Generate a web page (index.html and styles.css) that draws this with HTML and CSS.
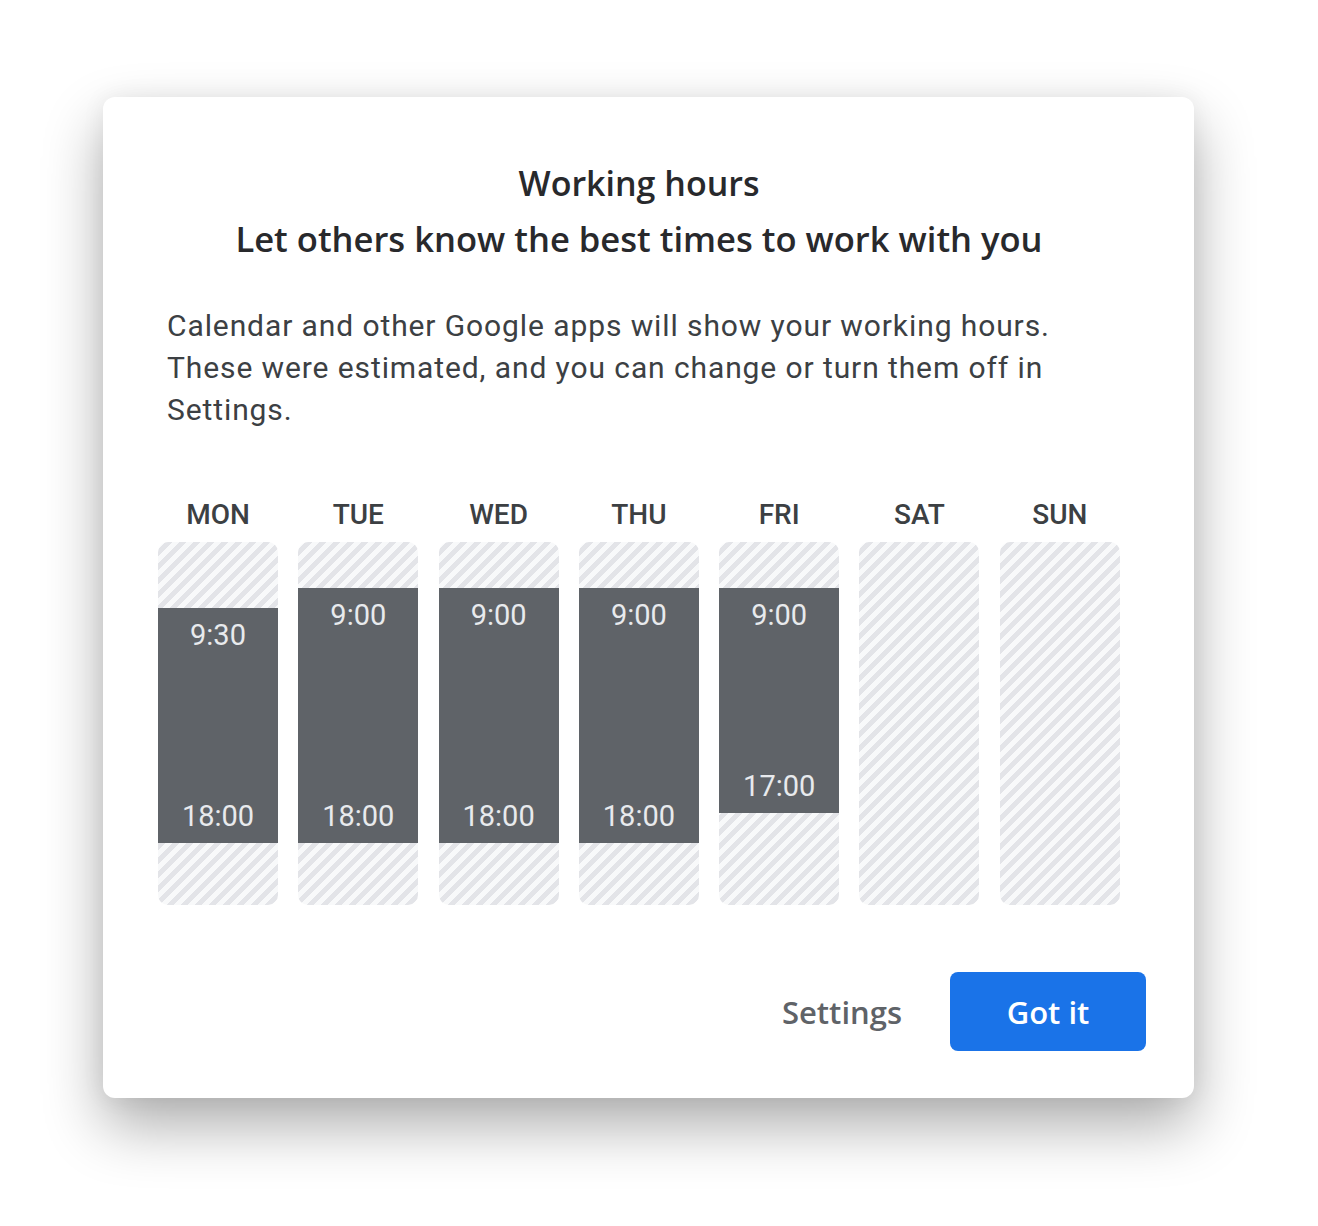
FILE: index.html
```html
<!DOCTYPE html>
<html lang="en">
<head>
    <meta charset="UTF-8">
    <meta name="viewport" content="width=device-width, initial-scale=1.0">
    <title>Working hours</title>
    <link rel="stylesheet" href="styles.css">
</head>
<body>
    <div class="dialog">
        <header class="dialog-header">
            <h1>Working hours</h1>
            <h2>Let others know the best times to work with you</h2>
        </header>

        <p class="dialog-text">
            Calendar and other Google apps will show your working hours.
            These were estimated, and you can change or turn them off in
            Settings.
        </p>

        <div class="week">
            <div class="day">
                <span class="day-name">MON</span>
                <div class="day-track">
                    <div class="hours" style="top: 66px; height: 235px;">
                        <span>9:30</span>
                        <span>18:00</span>
                    </div>
                </div>
            </div>
            <div class="day">
                <span class="day-name">TUE</span>
                <div class="day-track">
                    <div class="hours" style="top: 46px; height: 255px;">
                        <span>9:00</span>
                        <span>18:00</span>
                    </div>
                </div>
            </div>
            <div class="day">
                <span class="day-name">WED</span>
                <div class="day-track">
                    <div class="hours" style="top: 46px; height: 255px;">
                        <span>9:00</span>
                        <span>18:00</span>
                    </div>
                </div>
            </div>
            <div class="day">
                <span class="day-name">THU</span>
                <div class="day-track">
                    <div class="hours" style="top: 46px; height: 255px;">
                        <span>9:00</span>
                        <span>18:00</span>
                    </div>
                </div>
            </div>
            <div class="day">
                <span class="day-name">FRI</span>
                <div class="day-track">
                    <div class="hours" style="top: 46px; height: 225px;">
                        <span>9:00</span>
                        <span>17:00</span>
                    </div>
                </div>
            </div>
            <div class="day">
                <span class="day-name">SAT</span>
                <div class="day-track"></div>
            </div>
            <div class="day">
                <span class="day-name">SUN</span>
                <div class="day-track"></div>
            </div>
        </div>

        <div class="dialog-actions">
            <button class="btn btn-text">Settings</button>
            <button class="btn btn-primary">Got it</button>
        </div>
    </div>
</body>
</html>
```

FILE: styles.css
```css
body {
    margin: 0;
    padding: 97px 0 128px 103px;
    background-color: #fff;
    font-family: Roboto, 'Noto Sans', sans-serif;
    color: #3c4043;
}

.dialog {
    box-sizing: border-box;
    width: 1091px;
    height: 1001px;
    padding: 58px 74px 47px 55px;
    background: #fff;
    border-radius: 12px;
    box-shadow: 0 28px 60px rgba(0, 0, 0, 0.32), 0 0 24px rgba(0, 0, 0, 0.06);
}

.dialog-header {
    text-align: center;
    color: #28292c;
}

.dialog-header h1,
.dialog-header h2 {
    margin: 0;
    font-family: 'Open Sans', sans-serif;
    font-size: 34px;
    font-weight: 600;
    line-height: 56px;
}

.dialog-header h2 {
    font-size: 34.6px;
}

.dialog-text {
    margin: 38px 0 0;
    padding: 0 9px;
    font-size: 30px;
    letter-spacing: 0.9px;
    line-height: 42px;
    color: #3c4043;
}

.week {
    display: grid;
    grid-template-columns: repeat(7, 120px);
    gap: 20.3px;
    margin-top: 68px;
}

.day {
    display: flex;
    flex-direction: column;
    align-items: center;
}

.day-name {
    font-size: 28px;
    font-weight: 500;
    line-height: 32px;
    color: #3c4043;
    margin-bottom: 11px;
}

.day-track {
    position: relative;
    width: 100%;
    height: 363px;
    border-radius: 10px;
    overflow: hidden;
    background: repeating-linear-gradient(
        135deg,
        #f8f9fa 0,
        #f8f9fa 5.6px,
        #e3e4e8 5.6px,
        #e3e4e8 9.9px
    );
}

.hours {
    position: absolute;
    left: 0;
    right: 0;
    display: flex;
    flex-direction: column;
    justify-content: space-between;
    align-items: center;
    padding: 11px 0 11px;
    box-sizing: border-box;
    background: #5f6368;
    color: #e8eaed;
    font-size: 29px;
    line-height: 32px;
}

.dialog-actions {
    display: flex;
    justify-content: flex-end;
    align-items: center;
    gap: 28px;
    margin-top: 67px;
    margin-right: -26px;
}

.btn {
    border: none;
    font-family: 'Open Sans', sans-serif;
    font-size: 31px;
    font-weight: 600;
    cursor: pointer;
}

.btn-text {
    background: none;
    color: #5f6368;
    padding: 0 20px;
    height: 79px;
}

.btn-primary {
    width: 196px;
    height: 79px;
    border-radius: 8px;
    background: #1a73e8;
    color: #fff;
}
```
